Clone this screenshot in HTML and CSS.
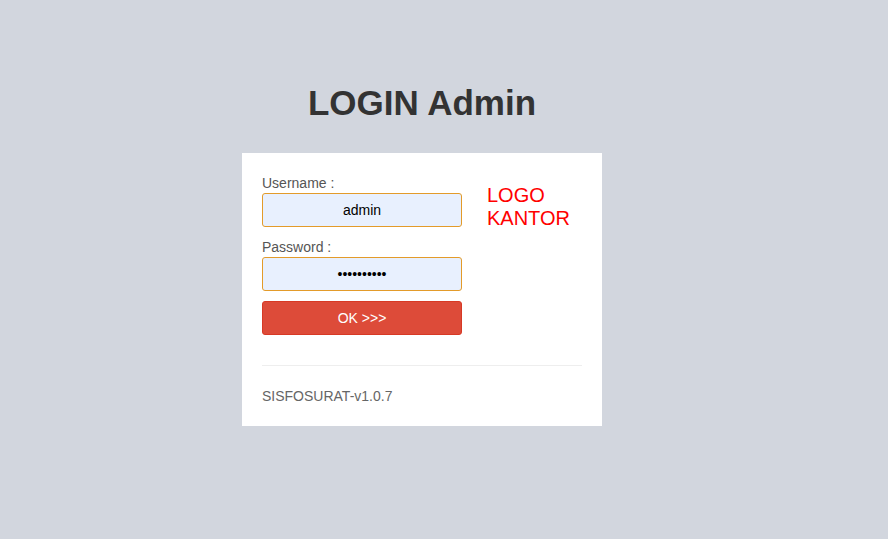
FILE: index.html
```html
<!DOCTYPE html>
<html lang="en">
<head>
    <meta charset="UTF-8">
    <meta name="viewport" content="width=device-width, initial-scale=1.0">
    <title>LOGIN Admin</title>
    <link rel="stylesheet" href="styles.css">
</head>
<body>

    <div class="login-page">
        <h1 class="login-title">LOGIN Admin</h1>

        <div class="login-box">
            <form class="login-form">
                <div class="form-fields">
                    <label for="username">Username :</label>
                    <input type="text" id="username" value="admin">

                    <label for="password" class="second">Password :</label>
                    <input type="password" id="password" value="1234567890">

                    <button type="submit" class="btn-login">OK &gt;&gt;&gt;</button>
                </div>
                <div class="logo">LOGO<br>KANTOR</div>
            </form>

            <hr class="divider">

            <div class="version">SISFOSURAT-v1.0.7</div>
        </div>
    </div>

</body>
</html>
```

FILE: styles.css
```css
body {
    font-family: "Liberation Sans", Arial, sans-serif;
    background-color: #d2d6de;
    margin: 0;
    padding: 0;
}

.login-page {
    width: 844px;
    padding-top: 83px;
}

.login-title {
    margin: 0 0 30px;
    font-size: 35px;
    line-height: 40px;
    font-weight: bold;
    text-align: center;
    color: #333;
}

.login-box {
    width: 320px;
    margin: 0 auto;
    background: white;
    padding: 20px;
}

.login-form {
    display: flex;
    gap: 25px;
}

.form-fields {
    width: 200px;
    display: flex;
    flex-direction: column;
}

.form-fields label {
    font-size: 14px;
    line-height: 20px;
    color: #555;
}

.form-fields label.second {
    margin-top: 10px;
}

.form-fields input {
    box-sizing: border-box;
    width: 200px;
    height: 34px;
    padding: 0 10px;
    border: 1px solid #e39b2a;
    border-radius: 3px;
    background-color: #e8f0fe;
    font-family: "Liberation Sans", Arial, sans-serif;
    font-size: 14px;
    color: #000;
    text-align: center;
    outline: none;
}

.btn-login {
    margin-top: 10px;
    height: 34px;
    background-color: #dd4b39;
    border: 1px solid #d73925;
    border-radius: 3px;
    color: white;
    font-family: "Liberation Sans", Arial, sans-serif;
    font-size: 14px;
    cursor: pointer;
}

.logo {
    padding-top: 11px;
    font-size: 20px;
    line-height: 23px;
    color: #ff0000;
}

.divider {
    margin: 30px 0 20px;
    border: 0;
    border-top: 1px solid #eee;
}

.version {
    font-size: 14px;
    line-height: 20px;
    color: #666;
}
```
